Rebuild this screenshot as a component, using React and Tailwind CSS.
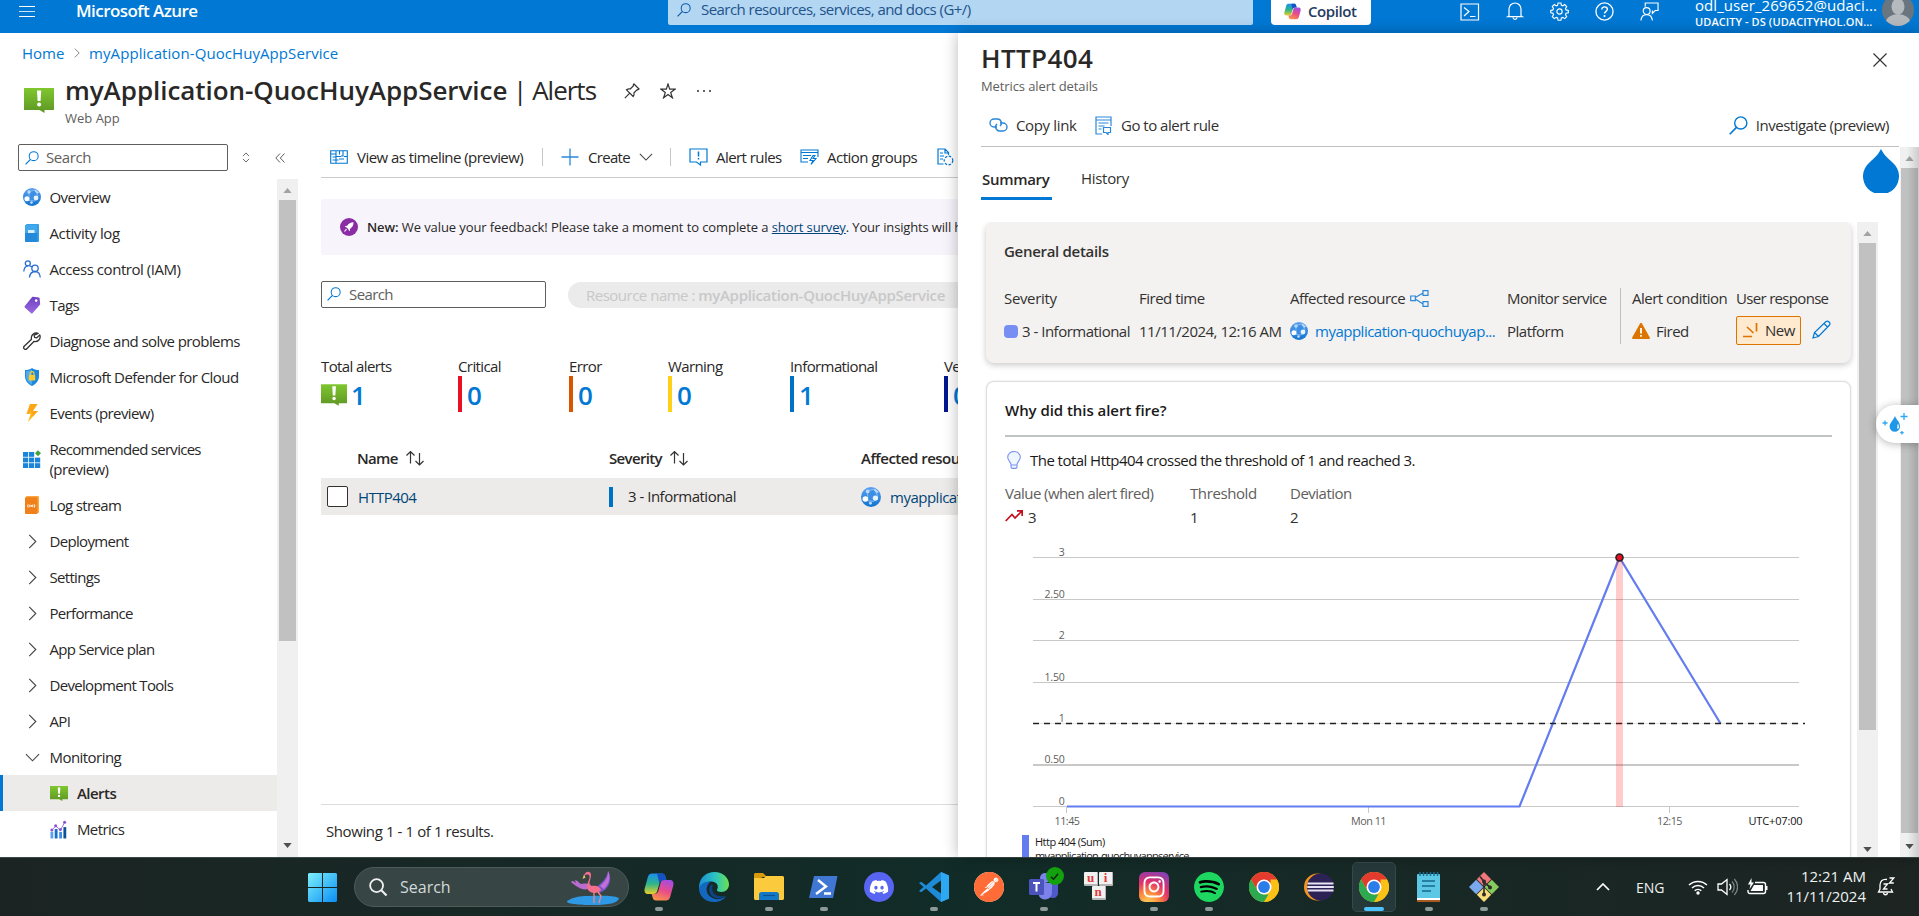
import React from "react";
import { FaDiscord, FaInstagram } from "react-icons/fa6";
import { SiSpotify, SiPostman } from "react-icons/si";

const S = ({ v = "0 0 18 18", c = "w-[18px] h-[18px]", children }) => (
  <svg viewBox={v} fill="none" className={"shrink-0 " + c}>{children}</svg>
);

/* ---------- Azure glyphs ---------- */
const AlertIcon = ({ c }) => (
  <S v="0 0 30 25" c={c}>
    <defs>
      <linearGradient id="alertGreen" x1="0" y1="0" x2="0" y2="1">
        <stop offset="0" stopColor="#7fc72f" />
        <stop offset="1" stopColor="#5e9624" />
      </linearGradient>
    </defs>
    <path d="M0.5 0h29a.5.5 0 0 1 .5.5v21a.5.5 0 0 1-.5.5H20.500v3L15.500 22H.5a.5.5 0 0 1-.5-.5V.5A.5.5 0 0 1 .5 0z" fill="url(#alertGreen)" />
    <path d="M13 2.500h4.200l-.6 10.500h-3z" fill="#fff" />
    <circle cx="15.100" cy="16.500" r="2" fill="#fff" />
  </S>
);
const Globe = ({ c = "w-[18px] h-[18px]" }) => (
  <S c={c}>
    <defs>
      <linearGradient id="globeBlue" x1="0" y1="0" x2="0" y2="1">
        <stop offset="0" stopColor="#5ea0ef" />
        <stop offset="1" stopColor="#0f74d0" />
      </linearGradient>
    </defs>
    <circle cx="9" cy="9" r="9" fill="url(#globeBlue)" />
    <path d="M6 3.500L12 2l3 6-3.500 5L6 12.500z" stroke="#9cc8f5" strokeWidth=".7" fill="#3d8fe6" />
    <circle cx="6" cy="4" r="1.700" fill="#b9dafa" />
    <circle cx="3.900" cy="10.800" r="2.500" fill="#fff" />
    <circle cx="13" cy="10" r="2.400" fill="#e8f3fd" />
    <circle cx="8.500" cy="14.600" r="1.300" fill="#b9dafa" />
    <path d="M12.500 1.500l3.500 3-1.500 1.200L11.500 3z" fill="#b9dafa" />
  </S>
);
const Book = () => (
  <S>
    <rect x="3" y="0" width="13" height="18" rx="1" fill="#32a0e6" />
    <rect x="2" y="1" width="12.500" height="17" rx=".8" fill="#2389d9" />
    <rect x="2" y="1" width="12.500" height="8" fill="#42a8ec" />
    <rect x="5" y="6" width="6.500" height="3" fill="#d9eefc" />
  </S>
);
const People = () => (
  <S>
    <g stroke="#2b6fd0" strokeWidth="1.300">
      <circle cx="4.800" cy="3.300" r="2.500" /><path d="M.8 11.500C1 8.500 2.800 6.300 4.800 6.200" />
      <circle cx="12" cy="8.300" r="3.200" /><path d="M6.500 17.500c.3-3.800 2.700-5.800 5.500-6 2.900 0 5 2.300 5.300 6M6.500 5.800l3 1" />
    </g>
  </S>
);
const Tag = () => (
  <S>
    <defs><linearGradient id="tagP" x1="0" y1="0" x2="0" y2="1"><stop offset="0" stopColor="#6f3fc2" /><stop offset="1" stopColor="#9b6be0" /></linearGradient></defs>
    <path d="M10 .8l5.800.8c.5 0 .8.400.8.900l.6 5.500c0 .3-.1.600-.3.800l-7.400 8.400c-.4.400-1 .4-1.400 0L1.800 11.500c-.4-.4-.4-1 0-1.400L9.200 1.100c.2-.2.500-.3.800-.3z" fill="url(#tagP)" />
    <circle cx="13.200" cy="4.600" r="1.300" fill="#fff" />
  </S>
);
const Wrench = () => (
  <S>
    <path d="M15.200 1.300a5 5 0 0 0-6.700 5.900L1.200 14.300a1.800 1.800 0 0 0 2.600 2.500l7.100-7.300a5 5 0 0 0 5.900-6.600l-3 2.900-2.200-.5-.5-2.100z" stroke="#333" strokeWidth="1.300" strokeLinejoin="round" />
  </S>
);
const Shield = () => (
  <S>
    <path d="M9 0c2 1.400 4.300 2 7 2.100V8c0 4.700-3 7.900-7 10-4-2.100-7-5.300-7-10V2.100C4.700 2 7 1.400 9 0z" fill="#1b88dd" />
    <path d="M9 1.200v15.500C5.500 14.800 3 12.200 3 8V3C5.300 2.900 7.300 2.300 9 1.200z" fill="#4aabf0" />
    <rect x="5.800" y="7" width="6.400" height="5.500" rx=".7" fill="#ffca28" />
    <path d="M7 7V5.700a2 2 0 0 1 4 0V7" stroke="#ffca28" strokeWidth="1.200" />
  </S>
);
const Bolt = () => (
  <S>
    <path d="M7 0h7.500L10 7h5L5 18l2.600-8H3.500z" fill="#ffb91c" />
    <path d="M7 0h7.500L10 7h5L10 12.500 8 7.500 3.500 10z" fill="#fa9a1c" opacity=".6" />
  </S>
);
const GridIcon = () => (
  <S>
    <g fill="#1b84d8">
      <rect x="0" y="2" width="5.200" height="4.800" /><rect x="6" y="2" width="5.200" height="4.800" />
      <rect x="0" y="7.600" width="5.200" height="4.800" /><rect x="6" y="7.600" width="5.200" height="4.800" /><rect x="12" y="7.600" width="5.200" height="4.800" />
      <rect x="0" y="13.200" width="5.200" height="4.800" /><rect x="6" y="13.200" width="5.200" height="4.800" /><rect x="12" y="13.200" width="5.200" height="4.800" />
    </g>
    <path d="M15 0.300L18 3.200 15 6.200 12 3.200z" fill="#43a23c" />
  </S>
);
const LogStream = () => (
  <S>
    <rect x="3" y="0" width="13" height="17" rx="1" fill="#fba63f" />
    <rect x="2" y="1.300" width="12.500" height="16.700" rx=".8" fill="#f0801a" />
    <g stroke="#fff" strokeWidth="1"><path d="M5.200 8.300a3 3 0 0 0 0 3.200M11.300 8.300a3 3 0 0 1 0 3.200M6.900 8.700v2.400M9.700 8.700v2.400" /></g>
    <circle cx="8.300" cy="9.900" r=".8" fill="#fff" />
  </S>
);
const MetricsIcon = () => (
  <S c="w-[17px] h-[19px]" v="0 0 18 19">
    <rect x="0.500" y="12" width="3" height="7" fill="#5ea0ef" /><rect x="5" y="9" width="3" height="10" fill="#1b6fc2" />
    <rect x="9.700" y="12" width="3" height="7" fill="#3d8fe6" /><rect x="14.200" y="7" width="3" height="12" fill="#0b5394" />
    <path d="M2 10l4-4 5.200 4 4.300-8" stroke="#9b6be0" strokeWidth="1" />
    <g fill="#8b50d8"><circle cx="2" cy="10" r="1.600" /><circle cx="6" cy="5.500" r="1.600" /><circle cx="11" cy="9.500" r="1.600" /><circle cx="15.500" cy="1.900" r="1.600" /></g>
  </S>
);
const Chev = ({ down, c = "w-[16px] h-[16px]", color = "#444" }) => (
  <S v="0 0 16 16" c={c}>
    <path d={down ? "M1 4.500L8 11.500 15 4.500" : "M4.500 1L11.500 8 4.500 15"} stroke={color} strokeWidth="1.200" />
  </S>
);
const Mag = ({ c = "w-[15px] h-[15px]", color = "#0078d4" }) => (
  <S v="0 0 15 15" c={c}>
    <circle cx="9.300" cy="5.500" r="4.800" stroke={color} strokeWidth="1.100" />
    <path d="M5.900 9L.6 14.400" stroke={color} strokeWidth="1.300" />
  </S>
);
const Sort = () => (
  <S v="0 0 20 16" c="w-[20px] h-[16px]">
    <path d="M5.500 13.500V1.500M1.500 5.500l4-4 4 4M14.500 3v12M10.500 11l4 4 4-4" stroke="#333" strokeWidth="1.200" />
  </S>
);

/* ---------- scroll bars ---------- */
const Tri = ({ up, dark }) => (
  <S v="0 0 10 6" c="w-[9px] h-[5px]">
    <path d={up ? "M5 0L10 6H0z" : "M0 0H10L5 6z"} fill={dark ? "#505050" : "#a3a3a3"} />
  </S>
);
const Scroll = ({ w, thumb, top = "h-[21px]", bottom = "pb-[9px]" }) => (
  <div className={"flex flex-col items-center bg-[#f0f0f0] shrink-0 " + w}>
    <div className={"flex items-center justify-center pt-[2px] shrink-0 " + top}><Tri up /></div>
    <div className={"w-[17px] bg-[#c1c1c1] shrink-0 " + thumb} />
    <div className={"mt-auto " + bottom}><Tri dark /></div>
  </div>
);

/* ---------- header ---------- */
const Header = () => (
  <header className="h-[33px] shrink-0 bg-[#0078d4] flex items-start overflow-hidden text-white">
    <div className="w-[76px] pl-[19px] pt-[6px] flex flex-col gap-[4px]">
      <div className="w-[16px] h-px bg-white" /><div className="w-[16px] h-px bg-white/80" /><div className="w-[16px] h-px bg-white" />
    </div>
    <div className="w-[592px] text-[17px] leading-[22px] font-semibold tracking-[-0.55px]">Microsoft Azure</div>
    <div className="w-[585px] h-[25px] bg-[#b3d6f2] rounded-b-[2px] flex items-center pl-[9px] gap-[10px] pb-[6px] text-[#21538a] text-[15px] tracking-[-0.54px]">
      <Mag c="w-[14px] h-[14px]" color="#0a5ca8" />Search resources, services, and docs (G+/)
    </div>
    <div className="ml-[18px] w-[100px] h-[25px] bg-white rounded-b-[4px] flex items-center pl-[13px] gap-[7px] pb-[3px] text-[#243a5e] text-[15px] font-semibold tracking-[-0.4px]">
      <CopilotIcon c="w-[17px] h-[17px]" />Copilot
    </div>
    <div className="ml-[89px] mt-[2px] flex gap-[26px] h-[18px]">
      <S c="w-[20px] h-[20px]" v="0 0 20 20"><path d="M1 2h17.500v16H1z" stroke="#fff" strokeWidth="1.200" /><path d="M4 5.500l5 4-5 4.500M10 14.500h5.500" stroke="#fff" strokeWidth="1.200" /></S>
      <S c="w-[18px] h-[18px]" v="0 0 18 18"><path d="M3 14V7a6 6 0 0 1 12 0V14l1 .6H2zM7 15.500c.2 2.400 3.800 2.400 4 0" stroke="#fff" strokeWidth="1.200" /></S>
      <S c="w-[19px] h-[19px]" v="0 0 20 20">
        <path d="M8.500 1h3l.5 2.400 1.500.6 2-1.300 2.100 2.100-1.300 2 .6 1.500 2.400.5v2.500l-2.400.6-.6 1.500 1.300 2-2.100 2.100-2-1.300-1.500.6-.5 2.400h-3l-.5-2.400-1.500-.6-2 1.300-2.100-2.100 1.300-2-.6-1.500L.8 11.300V8.800l2.300-.5.600-1.500-1.300-2 2.100-2.100 2 1.300L8 3.400z" stroke="#fff" strokeWidth="1.200" />
        <circle cx="10" cy="10" r="2.800" stroke="#fff" strokeWidth="1.200" />
      </S>
      <S c="w-[19px] h-[19px]" v="0 0 20 20"><circle cx="10" cy="10" r="9" stroke="#fff" strokeWidth="1.400" /><path d="M7.200 7.800C7.200 4.200 13 4.400 13 7.700c0 2-3 2.300-3 4.500" stroke="#fff" strokeWidth="1.500" /><circle cx="10" cy="14.800" r="1.100" fill="#fff" /></S>
      <S c="w-[19px] h-[19px]" v="0 0 20 20"><path d="M5.500 5V1h13.500v8h-3l-3 3V9M1 19.500c.4-4 2.400-6.200 6-6.200 3.700 0 5.600 2.300 6 6.200" stroke="#fff" strokeWidth="1.200" /><circle cx="7" cy="9.500" r="3.600" stroke="#fff" strokeWidth="1.200" /></S>
    </div>
    <div className="ml-[36px] w-[187px] flex flex-col whitespace-nowrap">
      <div className="text-[15px] leading-[20px] -mt-[5px] tracking-[0.06px]">odl_user_269652@udaci...</div>
      <div className="text-[11px] leading-[14px] font-semibold tracking-[0.08px]">UDACITY - DS (UDACITYHOL.ON...</div>
    </div>
    <S v="0 0 32 32" c="w-[32px] h-[32px] -mt-[6px]">
      <defs><clipPath id="av"><circle cx="16" cy="16" r="16" /></clipPath></defs>
      <g clipPath="url(#av)"><rect width="32" height="32" fill="#69757f" /><ellipse cx="16" cy="12.500" rx="6.500" ry="8" fill="#b5babf" /><ellipse cx="16" cy="29" rx="12.500" ry="9" fill="#b5babf" /></g>
    </S>
  </header>
);

function CopilotIcon({ c }) {
  return (
    <S v="0 0 30 30" c={c}>
      <defs>
        <linearGradient id="cpA" x1="0" y1="0" x2="0" y2="1"><stop offset="0" stopColor="#1a8ff0" /><stop offset=".5" stopColor="#2db58a" /><stop offset="1" stopColor="#e8cf2a" /></linearGradient>
        <linearGradient id="cpB" x1="0.700" y1="0" x2="0.300" y2="1"><stop offset="0" stopColor="#a24de0" /><stop offset=".5" stopColor="#ea4c88" /><stop offset="1" stopColor="#f9934a" /></linearGradient>
      </defs>
      <path d="M8 1.500h10c2 0 2.800 1 3.400 3l1 3.500h-3c-2.400 0-3.400 1.200-4 3.500l-2 7c-.7 2.500-1.500 3.500-4 3.500H4c-3 0-4-2.500-3.300-5.500L4 4.500c.7-2 2-3 4-3z" fill="url(#cpA)" />
      <path d="M13 1.500h5c2 0 2.800 1 3.400 3l1 3.500h-3c-2.400 0-3.400 1.200-4 3.500z" fill="#1650c4" />
      <path d="M22 28.500H12c-2 0-2.800-1-3.400-3l-1-3.500h2.800c2.400 0 3.400-1.200 4-3.500l2-7c.7-2.500 1.500-3.500 4-3.500H26c3 0 4 2.500 3.300 5.500L26 25.500c-.7 2-2 3-4 3z" fill="url(#cpB)" />
    </S>
  );
}

/* ---------- side navigation ---------- */
const Item = ({ icon, children }) => (
  <div className="h-[36px] shrink-0 flex items-center pl-[23px]">
    <div className="w-[26.500px] flex items-center">{icon}</div>
    <span>{children}</span>
  </div>
);

const Sidebar = () => (
  <nav className="w-[298px] shrink-0 flex h-[678px] overflow-hidden">
    <div className="w-[277px] flex flex-col text-[15px] tracking-[-0.55px] whitespace-nowrap">
      <Item icon={<Globe />}>Overview</Item>
      <Item icon={<Book />}><span className="tracking-[-0.38px]">Activity log</span></Item>
      <Item icon={<People />}><span className="tracking-[-0.45px]">Access control (IAM)</span></Item>
      <Item icon={<Tag />}>Tags</Item>
      <Item icon={<Wrench />}><span className="tracking-[-0.58px]">Diagnose and solve problems</span></Item>
      <Item icon={<Shield />}>Microsoft Defender for Cloud</Item>
      <Item icon={<Bolt />}><span className="tracking-[-0.6px]">Events (preview)</span></Item>
      <div className="h-[56px] shrink-0 flex items-center pl-[23px]">
        <div className="w-[26.500px]"><GridIcon /></div>
        <span className="leading-[20px]"><span className="tracking-[-0.72px]">Recommended services</span><br />(preview)</span>
      </div>
      <Item icon={<LogStream />}><span className="tracking-[-0.65px]">Log stream</span></Item>
      {["Deployment", "Settings", "Performance", "App Service plan", "Development Tools", "API"].map((t) => (
        <Item key={t} icon={<div className="w-[18px] flex justify-center"><Chev c="w-[15px] h-[15px]" /></div>}><span className="tracking-[-0.68px]">{t}</span></Item>
      ))}
      <Item icon={<div className="w-[18px] flex justify-center"><Chev down c="w-[15px] h-[15px]" /></div>}>Monitoring</Item>
      <div className="h-[36px] shrink-0 flex items-center bg-[#edebe9] border-l-[3px] border-[#0078d4] pl-[47px] font-semibold">
        <div className="w-[27px]"><AlertIcon c="w-[18px] h-[15px]" /></div>Alerts
      </div>
      <div className="h-[36px] shrink-0 flex items-center pl-[50px] tracking-[-0.62px]"><div className="w-[27px]"><MetricsIcon /></div>Metrics</div>
    </div>
    <Scroll w="w-[21px]" thumb="h-[441px]" />
  </nav>
);

/* ---------- main list ---------- */
const Stat = ({ w, label, bar, n }) => (
  <div className={"shrink-0 " + w}>
    <div className="text-[15px] leading-[20px] tracking-[-0.6px]">{label}</div>
    <div className="flex items-center h-[36px]">
      {bar ? <div className={"w-[4px] h-[36px] mr-[5px] " + bar} /> : <AlertIcon c="w-[26px] h-[22px] mr-[4px] mt-[2px]" />}
      <span className="text-[26px] font-semibold text-[#0078d4] leading-[36px] pt-px">{n}</span>
    </div>
  </div>
);

const Main = () => (
  <main className="ml-[23px] w-[900px] shrink-0 flex flex-col whitespace-nowrap text-[15px] tracking-[-0.5px]">
    <div className="h-[46px] shrink-0 border-b border-[#ccc] flex items-center pl-[9px] pt-[5px]">
      <S c="w-[18px] h-[14px] mr-[9px]" v="0 0 18 14"><path d="M.7.7h16.600v12.600H.7zM.7 4h5M6 1v12M2.500 7H6M2.500 10h6M9.500 1v3.500M6 6.500h5M13 1v5h-2M14 9H9M17 6.500h-3" stroke="#0078d4" strokeWidth="1.100" /></S>
      <div className="w-[185px] tracking-[-0.55px]">View as timeline (preview)</div>
      <div className="w-px h-[18px] shrink-0 bg-[#c8c6c4] mr-[18px]" />
      <S c="w-[18px] h-[18px] mr-[9px]"><path d="M9 .5v17M.5 9h17" stroke="#2b88d8" strokeWidth="1.300" /></S>
      <div className="w-[51px] tracking-[-0.7px]">Create</div>
      <Chev down c="w-[14px] h-[14px]" />
      <div className="w-px h-[18px] shrink-0 bg-[#c8c6c4] ml-[17px] mr-[18px]" />
      <S c="w-[19px] h-[18px] mr-[8px]" v="0 0 19 18"><path d="M1 1h17v13H11.500v3l-4-3H1z" stroke="#0078d4" strokeWidth="1.200" /><path d="M9.500 3.500v5M9.500 10v1.500" stroke="#0078d4" strokeWidth="1.500" /></S>
      <div className="w-[84px] tracking-[-0.55px]">Alert rules</div>
      <S c="w-[19px] h-[16px] mr-[8px]" v="0 0 19 16"><path d="M8 13H1V1h17v7M1 3.500h17M3 6.500h8M3 9.500h5M13 6.500l-3 5h3l-2 4 5-6h-3l2-3z" stroke="#0078d4" strokeWidth="1.100" /></S>
      <div className="w-[110px]">Action groups</div>
      <S c="w-[17px] h-[18px]" v="0 0 17 18"><path d="M6.500 16H1V1h7l3.500 3.500V7M8 1v4h3.500M3 5h3M3 8h4M3 11h3" stroke="#0078d4" strokeWidth="1.200" /><circle cx="11.500" cy="12.500" r="4.300" stroke="#0078d4" strokeWidth="1.200" strokeDasharray="2.500 1.500" /></S>
    </div>
    <div className="mt-[21px] h-[56px] shrink-0 bg-[#f8f4fb] rounded-[3px] flex items-center pl-[19px] text-[13px] tracking-[-0.09px]">
      <S c="w-[18px] h-[18px] mr-[9px]"><circle cx="9" cy="9" r="9" fill="#8a2da5" /><path d="M13.500 4.300c-3 0-5 1.500-6.300 3.500l-2.400.5 1 1 .9.300 1.700 1.700.3.900 1 1 .5-2.400c2-1.300 3.400-3.500 3.300-6.500z" fill="#fff" /><path d="M4.500 13.500l2-2.500" stroke="#fff" strokeWidth="1.200" /></S>
      <span className="pt-[2px]"><b className="font-semibold">New:</b> We value your feedback! Please take a moment to complete a <u className="text-[#004578]">short survey</u><span className="tracking-[-0.16px]">. Your insights will help us improve.</span></span>
    </div>
    <div className="mt-[26px] flex h-[27px] shrink-0">
      <div className="w-[225px] border border-[#605e5c] rounded-[2px] flex items-center pl-[5px] gap-[8px] text-[#605e5c] pb-px tracking-[-0.6px]"><Mag c="w-[14px] h-[14px]" />Search</div>
      <div className="ml-[22px] w-[440px] bg-[#ebebeb] rounded-full flex items-center pl-[18px] text-[#c8c8c8] mt-px">Resource name :&nbsp;<b className="font-semibold tracking-[-0.3px]">myApplication-QuocHuyAppService</b></div>
    </div>
    <div className="mt-[48px] flex shrink-0">
      <Stat w="w-[137px]" label="Total alerts" n="1" />
      <Stat w="w-[111px]" label="Critical" bar="bg-[#e81123]" n="0" />
      <Stat w="w-[99px]" label="Error" bar="bg-[#db5500]" n="0" />
      <Stat w="w-[122px]" label="Warning" bar="bg-[#fcd116]" n="0" />
      <Stat w="w-[154px]" label="Informational" bar="bg-[#0072c6]" n="1" />
      <Stat w="w-[120px]" label="Verbose" bar="bg-[#00188f]" n="0" />
    </div>
    <div className="mt-[28px] h-[38px] shrink-0 flex items-center font-semibold pb-[2px]">
      <div className="w-[252px] pl-[36px] flex items-center gap-[7px] tracking-[-0.7px]">Name<Sort /></div>
      <div className="w-[288px] pl-[36px] flex items-center gap-[7px] tracking-[-0.65px]">Severity<Sort /></div>
      <div>Affected resource</div>
    </div>
    <div className="h-[37px] shrink-0 bg-[#edebe9] flex items-center">
      <div className="ml-[6px] w-[21px] h-[21px] border border-[#323130] rounded-[2px] bg-white mr-[10px]" />
      <div className="w-[251px] text-[#004578] pt-[2px] tracking-[-0.6px]">HTTP404</div>
      <div className="w-[4px] h-[20px] bg-[#0072c6] mr-[15px]" />
      <div className="w-[233px] tracking-[-0.5px]">3 - Informational</div>
      <Globe c="w-[20px] h-[20px]" />
      <div className="ml-[9px] text-[#004578] pt-[2px]">myapplication-quochuyappservice</div>
    </div>
    <div className="mt-auto border-t border-[#dcdcdc] h-[53px] pl-[5px] flex items-center shrink-0 tracking-[-0.4px]">Showing 1 - 1 of 1 results.</div>
  </main>
);

/* ---------- details blade ---------- */
const ys = [37.5, 79.5, 120.5, 162.5, 203.5, 245, 286.5];
const labels = ["3", "2.50", "2", "1.50", "1", "0.50", "0"];
const Chart = () => (
  <svg width="860" height="310" viewBox="987 520 860 310" className="block shrink-0 text-[11px]">
    {ys.map((y, i) => (
      <g key={i}>
        <line x1="1033" x2="1799" y1={520 + y} y2={520 + y} stroke={i === 4 ? "#e4e4e4" : "#c8c8c8"} strokeWidth={i === 5 ? 2 : 1} />
        <text x="1064.500" y={520 + y - 2} textAnchor="end" fill="#605e5c" fontSize="10.500" letterSpacing="-.2">{labels[i]}</text>
      </g>
    ))}
    <path d="M1066.500 807v6M1368.500 807v6M1669.500 807v6" stroke="#c8c8c8" />
    <g fill="#605e5c" fontSize="10.800" textAnchor="middle"><text x="1067" y="825">11:45</text><text x="1368.500" y="825">Mon 11</text><text x="1669.500" y="825">12:15</text></g>
    <text x="1802.500" y="825" textAnchor="end" fill="#111" fontSize="11" letterSpacing="-.15">UTC+07:00</text>
    <path d="M1067 806.500H1519.500L1619.500 557.500 1720.500 723.500" stroke="#637cef" strokeWidth="2.200" fill="none" />
    <path d="M1033 723.500H1805" stroke="#222" strokeWidth="1.300" strokeDasharray="6 5" />
    <rect x="1616" y="560" width="7" height="247" fill="#ff0000" fillOpacity=".2" />
    <circle cx="1619.500" cy="557.500" r="3.500" fill="#e81123" stroke="#222" strokeWidth="1.600" />
  </svg>
);

const Col = ({ w, a, b }) => (
  <div className={"shrink-0 flex flex-col " + w}>
    <div className="h-[20px] flex items-center mb-[9px]">{a}</div>
    <div className="h-[28px] flex items-center">{b}</div>
  </div>
);

const Blade = () => (
  <section className="relative w-[961px] shrink-0 bg-white shadow-[0_0_14px_rgba(0,0,0,0.28)] flex flex-col text-[#323130] text-[15px] tracking-[-0.5px] whitespace-nowrap">
    <div className="h-[68px] shrink-0 flex justify-between pl-[23px] pr-[32px]">
      <div>
        <div className="text-[26px] leading-[32px] font-semibold text-[#292827] mt-[9px] tracking-[0.4px]">HTTP404</div>
        <div className="text-[13px] leading-[18px] mt-[3px] text-[#605e5c] tracking-[-0.1px]">Metrics alert details</div>
      </div>
      <S v="0 0 14 14" c="w-[14px] h-[14px] mt-[20px]"><path d="M.5.5l13 13M13.500.5l-13 13" stroke="#333" strokeWidth="1.200" /></S>
    </div>
    <div className="ml-[23px] w-[918px] h-[46px] shrink-0 border-b border-[#c0c0c0] flex items-center pl-[8px] pt-[3px]">
      <S c="w-[19px] h-[14px] mr-[8px]" v="0 0 19 14"><path d="M8 9H5a4 4 0 0 1 0-8h3.500a4 4 0 0 1 2.500 7M11 5h3a4 4 0 0 1 0 8h-3.500A4 4 0 0 1 8 6" stroke="#2b88d8" strokeWidth="1.400" /></S>
      <div className="w-[79px] tracking-[-0.35px]">Copy link</div>
      <S c="w-[17px] h-[19px] mr-[9px]" v="0 0 17 19"><path d="M7 18H1V1h15v9M1 4h15M3.500 7h10M3.500 10h6M3.500 13h3" stroke="#2b88d8" strokeWidth="1.200" /><path d="M8.500 11.500h7v5h-2.500v2l-2-2H8.500z" stroke="#2b88d8" strokeWidth="1.200" /></S>
      <div className="tracking-[-0.5px]">Go to alert rule</div>
      <div className="ml-auto flex items-center gap-[8px] pr-[10px]"><Mag c="w-[19px] h-[19px]" />Investigate (preview)</div>
    </div>
    <div className="flex flex-1 min-h-0">
      <div className="w-[942px] shrink-0 flex flex-col min-h-0">
        <div className="h-[75px] shrink-0 flex justify-between">
          <div className="flex h-[53px] ml-[23px]">
            <div className="w-[71px] border-b-[3px] border-[#0078d4] font-semibold text-[#292827] pl-px pt-[22px] leading-[20px] tracking-[-0.3px]">Summary</div>
            <div className="ml-[29px] pt-[21px] leading-[20px] tracking-[-0.3px]">History</div>
          </div>
          <S v="0 0 36 44" c="w-[36px] h-[44px] mt-[2px] mr-px"><path d="M18 0C21 6 24.500 9 29.500 13.500A18 18 0 1 1 6.500 13.500C11.500 9 15 6 18 0z" fill="#0078d4" /></S>
        </div>
        <div className="flex flex-1 min-h-0">
          <div className="w-[899px] shrink-0 overflow-hidden pl-[28px]">
            <div className="w-[865px] h-[141px] rounded-[8px] bg-[#f3f2f1] shadow-[0_2px_6px_rgba(0,0,0,0.22)] pl-[18px] pt-[19px]">
              <div className="font-semibold leading-[20px] mb-[27px] tracking-[-0.3px]">General details</div>
              <div className="flex">
                <Col w="w-[135px]" a={<span className="tracking-[-0.35px]">Severity</span>} b={<><div className="w-[14px] h-[13px] rounded-[4px] bg-[#778ef2] mr-[4px]" /><span className="tracking-[-0.5px]">3 - Informational</span></>} />
                <Col w="w-[151px]" a={<span className="tracking-[-0.5px]">Fired time</span>} b="11/11/2024, 12:16 AM" />
                <Col w="w-[217px]" a={<>Affected resource<S v="0 0 19 17" c="w-[19px] h-[17px] ml-[5px]"><path d="M.7 6h4.600v4.600H.7zM13 .7h5v4.600h-5zM13 11.700h5v4.600h-5zM5.300 7.500L13 3M5.300 9L13 14" stroke="#2b88d8" strokeWidth="1.200" /></S></>}
                  b={<><Globe /><span className="ml-[7px] text-[#0078d4]">myapplication-quochuyap...</span></>} />
                <Col w="w-[113px]" a={<span className="tracking-[-0.6px]">Monitor service</span>} b="Platform" />
                <div className="w-px shrink-0 h-[56px] bg-[#c0c0c0] mr-[11px]" />
                <Col w="w-[104px]" a={<span className="tracking-[-0.5px]">Alert condition</span>} b={<><S v="0 0 18 16" c="w-[18px] h-[16px] mr-[6px]"><path d="M8 .5a1.200 1.200 0 0 1 2 0l7.800 14c.4.800 0 1.500-.8 1.500H1c-.8 0-1.200-.7-.8-1.500z" fill="#db7500" /><path d="M9 5v5.500M9 12v1.800" stroke="#fff" strokeWidth="1.800" /></S>Fired</>} />
                <Col w="w-[120px]" a={<span className="tracking-[-0.68px]">User response</span>} b={<>
                  <div className="w-[65px] h-[29px] -mt-[2px] border border-[#db7500] rounded-[2px] bg-[#ffe9cf] flex items-center pl-[6px]">
                    <S v="0 0 15 15" c="w-[15px] h-[15px] mr-[7px]"><path d="M0 13.500h9M4 4l6.500 6M13.500 0v8.500" stroke="#db7500" strokeWidth="1.700" /></S>New
                  </div>
                  <S v="0 0 19 19" c="w-[19px] h-[19px] ml-[11px] -mt-[3px]"><path d="M1 18l1.500-5.500L14 1.500c2-1.300 5 1.500 3.500 3.500L6.500 16.500zM2.500 12.500l4 4M12 3.500L15.500 7" stroke="#0078d4" strokeWidth="1.200" /></S>
                </>} />
              </div>
            </div>
            <div className="mt-[18px] w-[865px] h-[520px] rounded-[8px] bg-white border border-[#dedede] shadow-[0_0_2px_rgba(0,0,0,0.15)] pt-[18px]">
              <div className="pl-[18px] pr-[18px]">
                <div className="font-semibold leading-[20px] text-[#1b1a19] tracking-[-0.05px]">Why did this alert fire?</div>
                <div className="mt-[15px] h-[2px] bg-[#c0c4c4]" />
                <div className="mt-[13px] h-[20px] flex items-center text-[#1b1a19] tracking-[-0.54px]">
                  <S v="0 0 14 18" c="w-[14px] h-[18px] ml-[2px] mr-[9px]"><path d="M4 13.500C4 11 .7 9.800.7 6.300a6.300 5.800 0 0 1 12.600 0C13.300 9.800 10 11 10 13.500v2.700L9 17.400H5l-1-1.200zM4 14h6" stroke="#7d92ee" strokeWidth="1.100" fill="#eef6ff" /></S>
                  The total Http404 crossed the threshold of 1 and reached 3.
                </div>
                <div className="mt-[13px] flex leading-[20px] tracking-[-0.58px]">
                  <div className="w-[185px] text-[#605e5c]">Value (when alert fired)</div><div className="w-[100px] text-[#605e5c] tracking-[-0.4px]">Threshold</div><div className="text-[#605e5c] tracking-[-0.5px]">Deviation</div>
                </div>
                <div className="mt-[4px] flex leading-[20px]">
                  <div className="w-[185px] flex items-center"><S v="0 0 18 12" c="w-[18px] h-[12px] mr-[5px] -mt-[2px]"><path d="M.7 11L7 4.500l3 3.500 6.500-6.500M12 .9h5.200V6" stroke="#c50f1f" strokeWidth="1.700" /></S>3</div>
                  <div className="w-[100px]">1</div><div>2</div>
                </div>
              </div>
              <div className="-mt-[7px]"><Chart /></div>
              <div className="ml-[35px] mt-[5px] flex text-[11px] leading-[14px] tracking-[-0.5px] text-[#1b1a19]">
                <div className="w-[7px] h-[40px] bg-[#637cef] mr-[6px]" />
                <div>Http 404 (Sum)<br /><span className="tracking-[-0.7px]">myapplication-quochuyappservice</span></div>
              </div>
            </div>
          </div>
          <Scroll w="w-[21px]" thumb="h-[487px]" bottom="pb-[5px]" />
          <div className="relative z-10 mt-[183px] -ml-[2px] w-[44px] h-[38px] shrink-0 rounded-l-full bg-white shadow-[0_1px_8px_rgba(0,0,0,0.3)] flex items-center pl-[6px]">
            <S v="0 0 26 24" c="w-[26px] h-[24px]"><path d="M13 4c1.500 4 5 6 5 10.500a5.200 5.200 0 0 1-10.400 0C7.600 11 11.500 8 13 4z" fill="#1f98e8" /><path d="M15.800 12.500c.8 1.500.6 2.800-.3 4" stroke="#fff" strokeWidth="1.300" /><path d="M22 1v7M18.500 4.500h7M3 8.500v5M.5 11h5M20 19v3.500M18.200 20.700h3.500" stroke="#2ba8f4" strokeWidth="1.300" /></S>
          </div>
        </div>
      </div>
      <div className="relative flex">
        <Scroll w="w-[19px]" thumb="h-[665px]" bottom="pb-[8px]" />
        <div className="absolute inset-y-0 right-0 w-[12px] bg-linear-to-r from-transparent to-black/15" />
      </div>
    </div>
  </section>
);

/* ---------- task bar ---------- */
const Chrome = () => (
  <S v="0 0 30 30" c="w-[30px] h-[30px]">
    <circle cx="15" cy="15" r="15" fill="#fbc116" />
    <path d="M15 15L8.500 18.700 2 7.500a15 15 0 0 1 26 0z" fill="#e33b2e" />
    <path d="M2 7.500L8.500 18.700 15 22.500h6.500L15 30A15 15 0 0 1 2 7.500z" fill="#2da94f" />
    <path d="M15 30l6.500-11.300L21.500 7.500H28A15 15 0 0 1 15 30z" fill="#fbc116" />
    <circle cx="15" cy="15" r="7.500" fill="#fff" /><circle cx="15" cy="15" r="5.900" fill="#2b7de9" />
  </S>
);
const App55 = ({ children, dot = true, active }) => (
  <div className="w-[55px] shrink-0 flex justify-center">
    <div className={"w-[44px] h-[50px] mt-[4px] rounded-[5px] flex flex-col items-center " + (active ? "bg-[#26393a] border border-[#35484a]" : "")}>
      <div className={"h-[30px] flex items-center " + (active ? "mt-[9px]" : "mt-[10px]")}>{children}</div>
      {dot && <div className={"mt-[5px] h-[4px] rounded-full " + (active ? "w-[20px] bg-[#4cc2ff]" : "w-[8px] bg-[#8e9a98]")} />}
    </div>
  </div>
);
const Key = ({ children }) => (
  <div className="w-[14px] h-[14px] bg-[#f1f1f1] border-b-2 border-r border-[#b5b5b5] rounded-[1px] flex items-center justify-center leading-[10px]">{children}</div>
);
const Taskbar = () => (
  <footer className="h-[59px] shrink-0 flex bg-linear-to-r from-[#1b2423] via-[#112c28] to-[#1d2422] border-t border-[#3a4a47] text-[#eef2f1]">
    <div className="w-[308px] shrink-0" />
    <S v="0 0 29 29" c="w-[29px] h-[29px] mt-[15px]">
      <defs><linearGradient id="win" x1="0" y1="0" x2="1" y2="1"><stop offset="0" stopColor="#7df0fb" /><stop offset="1" stopColor="#0a8ef5" /></linearGradient></defs>
      <path d="M1 0h13v14H0V1zM15 0h13l1 1v13H15zM0 15h14v14H1l-1-1zM15 15h14v13l-1 1H15z" fill="url(#win)" />
    </S>
    <div className="ml-[17px] mt-[9px] w-[275px] h-[40px] rounded-full bg-[#374645] border border-[#4d5b59] flex items-center pl-[14px] text-[16px] text-[#d3d9d8]">
      <S v="0 0 20 20" c="w-[19px] h-[19px] mr-[12px]"><circle cx="8" cy="8" r="6.800" stroke="#f0f0f0" strokeWidth="1.900" /><path d="M13 13l5.500 5.500" stroke="#f0f0f0" strokeWidth="2.200" /></S>
      Search
      <S v="0 0 54 35" c="w-[54px] h-[35px] ml-auto mr-[8px]">
        <path d="M1 31c6-4 13-5 21-5 12 0 24-1 31 2-1 5-10 7-25 7C12 35 0 34 1 31z" fill="#2e9ae6" />
        <path d="M29 21C31 14 41 11 42 1c5 8 1 19-9 22z" fill="#7a55cc" /><path d="M34 16c5-4 8-8 8-15 3 6 1 13-4 18z" fill="#c070d6" />
        <path d="M25 18c-8 4-14-1-20-6 1-2 3-1 5 1l-1-3c3 0 4 4 7 4 3-1 6 0 9 1z" fill="#b96bd0" />
        <path d="M18 6c1-6 8-5 7 0-.5 4-3 8 0 10 4-1 9 0 10 4-3 4-10 4-13 0-3-6 2-9 1.500-14-.4-2-3.500-2-5.500 0z" fill="#f46e8d" />
        <path d="M28 22v11M32 22l3 4-2 7" stroke="#f4857f" strokeWidth="1.300" /><path d="M18 4.500l-1.500 4.500 3-1.500z" fill="#f6c26b" />
      </S>
    </div>
    <div className="ml-[2px] flex">
      <App55><CopilotIcon c="w-[30px] h-[30px]" /></App55>
      <App55 dot={false}>
        <S v="0 0 30 30" c="w-[30px] h-[30px]">
          <defs><linearGradient id="ed" x1="0" y1="0" x2="1" y2="0"><stop offset="0" stopColor="#1b8fd6" /><stop offset=".55" stopColor="#2cc3c0" /><stop offset="1" stopColor="#6ae34f" /></linearGradient></defs>
          <path d="M0 14C1 5 7.500 0 15.500 0 24 0 30 6 30 12.500c0 4.500-3.500 7.500-7.500 7.500-3.500 0-5-1.300-4.500-2.500C20 15 18.500 9.500 12 9.500 6 9.500 2 13 0 18z" fill="url(#ed)" />
          <path d="M0 16C2 11 6.500 9.500 12 9.500c-5 3-6 10-1.500 14.500 4 4 11 4.500 16.500 0-2.500 4-7 6-12 6C6 30 0 24 0 16z" fill="#1467bf" />
          <path d="M12 12.500c-4.500 5.500-.5 13.500 7 14 3 .2 5.500-.8 8-2.500-5 1-12 0-13.500-5-.8-2.500 0-4.500.5-6z" fill="#0d4285" />
        </S>
      </App55>
      <App55>
        <S v="0 0 30 28" c="w-[30px] h-[28px]"><path d="M0 1.500C0 .7.700 0 1.500 0H9l4 4h-4L0 8z" fill="#d99a0b" /><path d="M0 5h10l2-2h16.500c.8 0 1.500.7 1.500 1.500v21c0 .8-.7 1.500-1.500 1.500h-27C.7 27 0 26.300 0 25.500z" fill="#fccb3d" /><path d="M5 27v-5.500c0-1.400 1-2.500 2.500-2.500h15c1.500 0 2.500 1.100 2.500 2.500V27z" fill="#1478c8" /><path d="M9 22.500h12" stroke="#0d4f8a" strokeWidth="1.200" /></S>
      </App55>
      <App55>
        <S v="0 0 29 22" c="w-[29px] h-[22px]"><path d="M5 0h23.500L24 22H0z" fill="#3f77d2" /><path d="M9 4l8 6.500L7 18M15 17.500h7" stroke="#fff" strokeWidth="2.400" /></S>
      </App55>
      <App55 dot={false}><div className="w-[30px] h-[30px] rounded-full bg-[#5865f2] flex items-center justify-center"><FaDiscord className="w-[20px] h-[20px] text-white" /></div></App55>
      <App55>
        <S v="0 0 30 30" c="w-[30px] h-[30px]"><path d="M22 0l8 3.500v23L22 30 7 16.500l-4.800 3.700L0 19l4.500-4L0 11l2.200-1.200L7 13.500zM22 8.500L13 15l9 6.500z" fill="#1f8bd8" fillRule="evenodd" /><path d="M22 0l8 3.500v23L22 30z" fill="#2fa8f2" /></S>
      </App55>
      <App55 dot={false}><div className="w-[30px] h-[30px] rounded-full bg-white"><SiPostman className="w-[30px] h-[30px] text-[#ff6c37]" /></div></App55>
      <App55>
        <div className="relative">
          <S v="0 0 30 30" c="w-[30px] h-[30px]"><circle cx="26" cy="9" r="3.500" fill="#5059c9" /><circle cx="16" cy="6" r="5" fill="#7b83eb" /><path d="M19 12h10v8a5 5 0 0 1-10 2z" fill="#5059c9" /><path d="M10 11h13v10a7 7 0 0 1-13 3z" fill="#7b83eb" /><rect x="0" y="7" width="15" height="16" rx="1.500" fill="#4b53bc" /><path d="M4 11h7M7.500 11v8.500" stroke="#fff" strokeWidth="2" /></S>
          <div className="absolute -top-[5px] left-[17px] w-[18px] h-[18px] rounded-full bg-[#13a10e] flex items-center justify-center"><S v="0 0 10 10" c="w-[9px] h-[9px]"><path d="M1 5.500L4 8l5-6" stroke="#0d2a12" strokeWidth="1.700" /></S></div>
        </div>
      </App55>
      <App55 dot={false}>
        <div className="flex flex-col items-center text-[#e03a3a] font-['Liberation_Serif',serif] font-bold text-[13px] -mt-[2px]">
          <div className="flex gap-px"><Key>u</Key><Key>i</Key></div>
          <Key>n</Key>
        </div>
      </App55>
      <App55><div className="w-[30px] h-[30px] rounded-[6px] bg-[radial-gradient(circle_at_30%_105%,#fdd45c_0%,#fb8a3c_30%,#e1306c_58%,#6a45c8_100%)] flex items-center justify-center"><FaInstagram className="w-[24px] h-[24px] text-white" /></div></App55>
      <App55><div className="w-[30px] h-[30px] rounded-full bg-black"><SiSpotify className="w-[30px] h-[30px] text-[#1ed760]" /></div></App55>
      <App55 dot={false}><Chrome /></App55>
      <App55 dot={false}>
        <S v="0 0 30 28" c="w-[30px] h-[28px]"><circle cx="13.500" cy="14" r="13.500" fill="#f7941e" /><circle cx="16.500" cy="14" r="13.500" fill="#2c2255" /><path d="M3.500 10.500h26M3.200 14h26.600M3.500 17.500h26" stroke="#e6e3f5" strokeWidth="1.800" /></S>
      </App55>
      <App55 active><Chrome /></App55>
      <App55>
        <S v="0 0 23 30" c="w-[23px] h-[30px]"><rect x="0" y="2" width="23" height="26" rx="1" fill="#5cc8e6" /><rect x="0" y="26" width="23" height="2" fill="#fff" /><rect x="0" y="28" width="23" height="2" fill="#a85a22" /><path d="M3 0v4M6.500 0v4M10 0v4M13.500 0v4M17 0v4M20.500 0v4" stroke="#1a6f96" strokeWidth="1.500" /><path d="M5 9h13M5 14h13M5 19h9" stroke="#15678f" strokeWidth="1.700" /></S>
      </App55>
      <App55>
        <S v="0 0 30 30" c="w-[30px] h-[30px]"><path d="M15 0l7.200 7.200L15 14.400 7.800 7.200z" fill="#f0777b" /><path d="M7.200 7.800L14.400 15l-7.200 7.200L0 15z" fill="#7ba9ee" /><path d="M22.800 7.800L30 15l-7.200 7.200L15.600 15z" fill="#86cc5d" /><path d="M15 15.600l7.200 7.200L15 30l-7.200-7.200z" fill="#f8dc79" /><path d="M11 4.500l4 5V23M15 10.500l6 4.500" stroke="#2b2b2b" strokeWidth="1.600" /><circle cx="15" cy="9.500" r="2" fill="#2b2b2b" /><circle cx="21" cy="15.500" r="2" fill="#2b2b2b" /><circle cx="15" cy="22.500" r="2" fill="#2b2b2b" /></S>
      </App55>
    </div>
    <div className="ml-auto w-[323px] flex items-center pb-px">
      <S v="0 0 14 8" c="w-[14px] h-[8px]"><path d="M1 7l6-6 6 6" stroke="#fff" strokeWidth="1.700" /></S>
      <div className="ml-[26px] w-[52px] text-[14px] pt-px">ENG</div>
      <S v="0 0 20 16" c="w-[20px] h-[16px]"><path d="M1 6a13 13 0 0 1 18 0M4 9a8.500 8.500 0 0 1 12 0M6.700 11.800a4.700 4.700 0 0 1 6.600 0" stroke="#fff" strokeWidth="1.500" /><circle cx="10" cy="14" r="1.700" fill="#fff" /></S>
      <S v="0 0 21 18" c="w-[21px] h-[18px] ml-[9px]"><path d="M1 6h3.500L10 1.500v15L4.500 12H1z" stroke="#fff" strokeWidth="1.300" /><path d="M12.500 6a4.500 4.500 0 0 1 0 6" stroke="#fff" strokeWidth="1.300" /><path d="M15 3.500a8 8 0 0 1 0 11M17.300 1a11.500 11.500 0 0 1 0 16" stroke="#7d8785" strokeWidth="1.200" /></S>
      <S v="0 0 21 17" c="w-[21px] h-[17px] ml-[9px]"><path d="M8 4.500h8.500a2 2 0 0 1 2 2v7a2 2 0 0 1-2 2H3a2 2 0 0 1-2-2V12" stroke="#fff" strokeWidth="1.400" /><path d="M7 7h9v6H3.500z" fill="#fff" /><path d="M19 8h1.500v4H19z" fill="#fff" /><path d="M4.500 0L1 6.500h2.500L2.500 11 7 4.500H4.500z" fill="#fff" /></S>
      <div className="ml-[10px] w-[88px] text-right text-[15px] leading-[20px] pb-px whitespace-nowrap">12:21 AM<br />11/11/2024</div>
      <S v="0 0 18 19" c="w-[18px] h-[19px] ml-[11px]"><path d="M10 2.500C5 1.500 3 5 3 8v4l-1.500 3h14L14 12M6.500 16c.5 2.300 3.500 2.300 4 0" stroke="#fff" strokeWidth="1.300" /><path d="M6.500 7h4l-4 5h4M12.500 1h4.300l-4.300 5h4.300" stroke="#fff" strokeWidth="1.300" /></S>
    </div>
  </footer>
);

export default function App() {
  return (
    <div className="w-[1919px] h-[916px] overflow-hidden flex flex-col bg-white font-['Open_Sans','Noto_Sans',sans-serif] text-[#292827]">
      <Header />
      <div className="h-[824px] shrink-0 flex">
        <div className="w-[958px] shrink-0 overflow-hidden flex flex-col">
          <div className="h-[42px] shrink-0 flex items-center pl-[22px] pb-[2px] text-[15px] text-[#0078d4]">
            <div className="w-[50px]">Home</div><Chev c="w-[10px] h-[14px]" color="#605e5c" /><div className="ml-[7px] tracking-[0.08px]">myApplication-QuocHuyAppService</div>
          </div>
          <div className="h-[57px] shrink-0 flex pl-[24px]">
            <AlertIcon c="w-[30px] h-[25px] mt-[13px]" />
            <div className="ml-[11px] w-[559px] whitespace-nowrap">
              <div className="text-[26px] leading-[33px] -mt-px"><b className="font-semibold tracking-[-0.05px]">myApplication-QuocHuyAppService</b><span className="tracking-[-1px]"> | Alerts</span></div>
              <div className="text-[13px] leading-[18px] mt-[2px] text-[#605e5c]">Web App</div>
            </div>
            <div className="flex gap-[20px] pt-[8px]">
              <S v="0 0 16 16" c="w-[16px] h-[16px]"><path d="M10 1l5 5-1.200.8-.6-.2L10 9.800c.3 1.500 0 2.600-.8 3.700L2.500 6.800C3.600 6 4.700 5.700 6.200 6l3.200-3.200-.2-.6zM5.800 10.200L.8 15.200" stroke="#333" strokeWidth="1.200" /></S>
              <S v="0 0 16 16" c="w-[16px] h-[16px]"><path d="M8 1l1.700 5.200H15l-4.300 3.200 1.700 5.400L8 11.500l-4.400 3.300 1.700-5.400L1 6.200h5.300z" stroke="#333" strokeWidth="1.200" /></S>
              <S v="0 0 16 16" c="w-[16px] h-[16px]"><g fill="#333"><circle cx="2" cy="8" r="1" /><circle cx="8" cy="8" r="1" /><circle cx="14" cy="8" r="1" /></g></S>
            </div>
          </div>
          <div className="flex flex-1 min-h-0">
            <div className="w-[298px] shrink-0 flex flex-col">
              <div className="h-[47px] shrink-0 flex items-center pl-[18px] pt-[4px]">
                <div className="w-[210px] h-[27px] border border-[#605e5c] rounded-[2px] flex items-center pl-[6px] gap-[7px] text-[15px] tracking-[-0.4px] text-[#605e5c]"><Mag c="w-[14px] h-[14px]" />Search</div>
                <S v="0 0 8 12" c="w-[8px] h-[11px] ml-[14px]"><path d="M.7 4.500L4 1l3.300 3.500M.7 7.500L4 11l3.300-3.500" stroke="#605e5c" /></S>
                <S v="0 0 10 10" c="w-[10px] h-[10px] ml-[25px]"><path d="M5 .5L.8 5 5 9.500M9.500.5L5.300 5l4.200 4.500" stroke="#605e5c" /></S>
              </div>
              <Sidebar />
            </div>
            <Main />
          </div>
        </div>
        <Blade />
      </div>
      <Taskbar />
    </div>
  );
}
